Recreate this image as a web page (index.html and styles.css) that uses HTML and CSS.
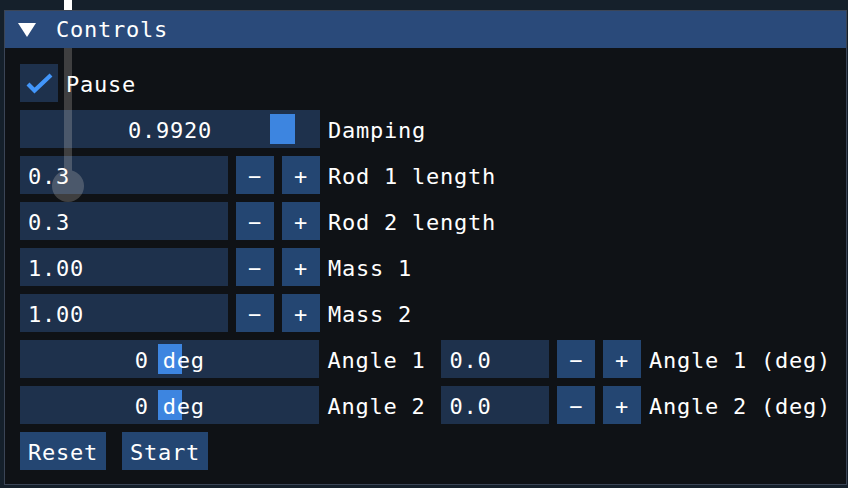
FILE: index.html
```html
<!DOCTYPE html>
<html>
<head>
<meta charset="utf-8">
<link rel="stylesheet" href="styles.css">
</head>
<body>
<div class="rod-top"></div>
<div class="window">
  <div class="titlebar">
    <svg class="arrow" width="18" height="14" viewBox="0 0 18 14"><polygon points="0,0 18,0 9,14" fill="#ffffff"/></svg>
    <span class="title">Controls</span>
  </div>
  <div class="body">
    <div class="row">
      <div class="checkbox">
        <svg width="38" height="38" viewBox="0 0 38 38"><polyline points="8,20 14.5,26.5 31,11" fill="none" stroke="#4296fa" stroke-width="4.2" stroke-linejoin="miter" stroke-linecap="butt"/></svg>
      </div>
      <span class="label">Pause</span>
    </div>
    <div class="row">
      <div class="slider"><span class="val">0.9920</span><div class="grab grab-damp"></div></div>
      <span class="label">Damping</span>
    </div>
    <div class="row">
      <div class="input">0.3</div>
      <div class="btn sq">−</div><div class="btn sq">+</div>
      <span class="label">Rod 1 length</span>
    </div>
    <div class="row">
      <div class="input">0.3</div>
      <div class="btn sq">−</div><div class="btn sq">+</div>
      <span class="label">Rod 2 length</span>
    </div>
    <div class="row">
      <div class="input">1.00</div>
      <div class="btn sq">−</div><div class="btn sq">+</div>
      <span class="label">Mass 1</span>
    </div>
    <div class="row">
      <div class="input">1.00</div>
      <div class="btn sq">−</div><div class="btn sq">+</div>
      <span class="label">Mass 2</span>
    </div>
    <div class="row">
      <div class="slider"><div class="grab grab-ang"></div><span class="val">0 deg</span></div>
      <span class="label">Angle 1</span>
      <div class="input small sp16">0.0</div>
      <div class="btn sq">−</div><div class="btn sq">+</div>
      <span class="label">Angle 1 (deg)</span>
    </div>
    <div class="row">
      <div class="slider"><div class="grab grab-ang"></div><span class="val">0 deg</span></div>
      <span class="label">Angle 2</span>
      <div class="input small sp16">0.0</div>
      <div class="btn sq">−</div><div class="btn sq">+</div>
      <span class="label">Angle 2 (deg)</span>
    </div>
    <div class="row wide">
      <div class="btn txt">Reset</div>
      <div class="btn txt">Start</div>
    </div>
  </div>
</div>
<svg class="pendulum" width="40" height="160" viewBox="0 0 40 160">
  <g opacity="0.2" fill="#fff4e6">
    <rect x="12" y="0" width="8" height="124"/>
    <circle cx="16" cy="138" r="16"/>
  </g>
</svg>
</body>
</html>
```
FILE: styles.css
```css
html, body {
  margin: 0;
  padding: 0;
}
body {
  background: #15202b;
  width: 848px;
  height: 488px;
  overflow: hidden;
  position: relative;
  font-family: "DejaVu Sans Mono", "Liberation Mono", monospace;
  font-size: 22px;
  letter-spacing: 0.75px;
  color: #ffffff;
}
.rod-top {
  position: absolute;
  left: 64px;
  top: 0;
  width: 8px;
  height: 10px;
  background: #ffffff;
}
.window {
  position: absolute;
  left: 4px;
  top: 10px;
  width: 841px;
  height: 473px;
  border: 1px solid #3b4556;
  background: #0f1216;
}
.titlebar {
  height: 37px;
  background: #2a4a7a;
  display: flex;
  align-items: center;
}
.arrow {
  margin-left: 13px;
  margin-top: 1px;
}
.title {
  margin-left: 20px;
  line-height: 39px;
}
.body {
  padding: 16px 15px;
  display: flex;
  flex-direction: column;
  gap: 8px;
}
.row {
  display: flex;
  height: 38px;
  gap: 8px;
  align-items: flex-start;
}
.row.wide {
  gap: 16px;
}
.label {
  height: 38px;
  line-height: 42px;
  white-space: pre;
}
.checkbox {
  width: 38px;
  height: 38px;
  background: #1e314c;
}
.checkbox svg {
  display: block;
}
.slider {
  position: relative;
  width: 300px;
  height: 38px;
  background: #1e314c;
  display: flex;
  justify-content: center;
  line-height: 42px;
}
.val {
  position: relative;
  white-space: pre;
}
.grab {
  position: absolute;
  top: 4px;
  height: 30px;
  width: 24px;
  background: #3d85e0;
}
.grab-damp {
  left: 250px;
  width: 25px;
}
.grab-ang {
  left: 138px;
}
.input {
  width: 200px;
  padding-left: 8px;
  height: 38px;
  line-height: 42px;
  background: #1e314c;
}
.input.small {
  width: 100px;
}
.sp16 {
  margin-left: 8px;
}
.btn {
  background: #244672;
  height: 38px;
  line-height: 42px;
  text-align: center;
}
.btn.sq {
  width: 38px;
}
.btn.txt {
  width: 86px;
}
.pendulum {
  position: absolute;
  left: 52px;
  top: 48px;
}
```
